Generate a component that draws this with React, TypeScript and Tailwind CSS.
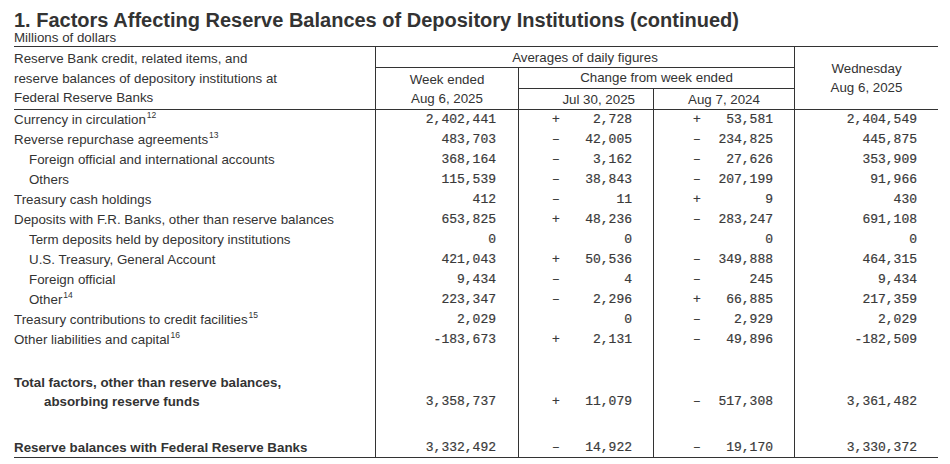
import React from 'react';

type Row = {
  label: string;
  sup?: string;
  indent?: boolean;
  week: string;
  s1: string;
  c1: string;
  s2: string;
  c2: string;
  wed: string;
};

const rows: Row[] = [
  { label: 'Currency in circulation', sup: '12', week: '2,402,441', s1: '+', c1: '2,728', s2: '+', c2: '53,581', wed: '2,404,549' },
  { label: 'Reverse repurchase agreements', sup: '13', week: '483,703', s1: '–', c1: '42,005', s2: '–', c2: '234,825', wed: '445,875' },
  { label: 'Foreign official and international accounts', indent: true, week: '368,164', s1: '–', c1: '3,162', s2: '–', c2: '27,626', wed: '353,909' },
  { label: 'Others', indent: true, week: '115,539', s1: '–', c1: '38,843', s2: '–', c2: '207,199', wed: '91,966' },
  { label: 'Treasury cash holdings', week: '412', s1: '–', c1: '11', s2: '+', c2: '9', wed: '430' },
  { label: 'Deposits with F.R. Banks, other than reserve balances', week: '653,825', s1: '+', c1: '48,236', s2: '–', c2: '283,247', wed: '691,108' },
  { label: 'Term deposits held by depository institutions', indent: true, week: '0', s1: '', c1: '0', s2: '', c2: '0', wed: '0' },
  { label: 'U.S. Treasury, General Account', indent: true, week: '421,043', s1: '+', c1: '50,536', s2: '–', c2: '349,888', wed: '464,315' },
  { label: 'Foreign official', indent: true, week: '9,434', s1: '–', c1: '4', s2: '–', c2: '245', wed: '9,434' },
  { label: 'Other', sup: '14', indent: true, week: '223,347', s1: '–', c1: '2,296', s2: '+', c2: '66,885', wed: '217,359' },
  { label: 'Treasury contributions to credit facilities', sup: '15', week: '2,029', s1: '', c1: '0', s2: '–', c2: '2,929', wed: '2,029' },
  { label: 'Other liabilities and capital', sup: '16', week: '-183,673', s1: '+', c1: '2,131', s2: '–', c2: '49,896', wed: '-182,509' },
];

const grid = 'grid grid-cols-[361px_143px_135px_141px_144px]';
const mono = "font-['Liberation_Mono',monospace] text-[13px] text-[#3a3a3a] [-webkit-text-stroke:0.2px_#3a3a3a]";

function Num({ sign, value, pr = 'pr-[21px]' }: { sign?: string; value: string; pr?: string }) {
  return (
    <div className={`flex justify-end ${pr} ${mono}`}>
      {sign !== undefined && <span className="w-[1ch] mr-[2px] text-center">{sign}</span>}
      <span className="w-[9ch] text-right whitespace-pre">{value}</span>
    </div>
  );
}

function Cells({ r, align = 'items-center' }: { r: Row; align?: string }) {
  return (
    <>
      <div className={`flex ${align} border-l border-[#333]`}>
        <div className="w-full"><Num value={r.week} pr="pr-[22px]" /></div>
      </div>
      <div className={`flex ${align} border-l border-[#333]`}>
        <div className="w-full"><Num sign={r.s1} value={r.c1} /></div>
      </div>
      <div className={`flex ${align} border-l border-[#333]`}>
        <div className="w-full"><Num sign={r.s2} value={r.c2} /></div>
      </div>
      <div className={`flex ${align} border-l border-[#333]`}>
        <div className="w-full"><Num value={r.wed} /></div>
      </div>
    </>
  );
}

function Spacer({ h }: { h: string }) {
  return (
    <div className={`${grid} ${h}`}>
      <div />
      <div className="border-l border-[#333]" />
      <div className="border-l border-[#333]" />
      <div className="border-l border-[#333]" />
      <div className="border-l border-[#333]" />
    </div>
  );
}

export default function App() {
  return (
    <div className="w-[950px] h-[464px] bg-white text-[#333] font-['Liberation_Sans',Arial,sans-serif] pl-[14px] overflow-hidden">
      <h1 className="pt-[9px] text-[20px] leading-[22px] font-bold">
        1. Factors Affecting Reserve Balances of Depository Institutions (continued)
      </h1>
      <div className="text-[13.33px] leading-[13px]">Millions of dollars</div>

      <div className="w-[924px] mt-[2px] text-[13.33px] border-t border-b border-[#333]">
        {/* header */}
        <div className={`${grid} grid-rows-[21px_21px_20px] border-b border-[#333]`}>
          <div className="row-span-3 pt-[2px] leading-[19.5px]">
            <div>Reserve Bank credit, related items, and</div>
            <div>reserve balances of depository institutions at</div>
            <div>Federal Reserve Banks</div>
          </div>
          <div className="col-span-3 border-l border-b border-[#333] flex items-center justify-center pt-[1px]">
            Averages of daily figures
          </div>
          <div className="row-span-3 border-l border-[#333] flex flex-col items-center justify-center leading-[18.5px] pt-[1px]">
            <div>Wednesday</div>
            <div>Aug 6, 2025</div>
          </div>
          <div className="row-span-2 border-l border-[#333] flex flex-col items-center justify-center leading-[19px]">
            <div>Week ended</div>
            <div>Aug 6, 2025</div>
          </div>
          <div className="col-span-2 border-l border-b border-[#333] flex items-center justify-center">
            Change from week ended
          </div>
          <div className="border-l border-[#333] flex items-center justify-end pr-[18px] pt-[1px]">
            Jul 30, 2025
          </div>
          <div className="border-l border-[#333] flex items-center justify-center pt-[1px]">
            Aug 7, 2024
          </div>
        </div>

        {/* body */}
        {rows.map((r) => (
          <div key={r.label} className={`${grid} h-[20px] leading-[20px]`}>
            <div className={r.indent ? 'pl-[15px]' : ''}>
              {r.label}
              {r.sup && <sup className="text-[8.5px] -top-[6px] ml-[1px]">{r.sup}</sup>}
            </div>
            <Cells r={r} />
          </div>
        ))}

        <Spacer h="h-[24px]" />

        <div className={`${grid} h-[37px] leading-[18.5px]`}>
          <div className="font-bold">
            <div>Total factors, other than reserve balances,</div>
            <div className="pl-[30px]">absorbing reserve funds</div>
          </div>
          <Cells
            align="items-end"
            r={{ label: 'total', week: '3,358,737', s1: '+', c1: '11,079', s2: '–', c2: '517,308', wed: '3,361,482' }}
          />
        </div>

        <Spacer h="h-[27px]" />

        <div className={`${grid} h-[19px] leading-[19px]`}>
          <div className="font-bold">Reserve balances with Federal Reserve Banks</div>
          <Cells r={{ label: 'reserve', week: '3,332,492', s1: '–', c1: '14,922', s2: '–', c2: '19,170', wed: '3,330,372' }} />
        </div>
      </div>
    </div>
  );
}
